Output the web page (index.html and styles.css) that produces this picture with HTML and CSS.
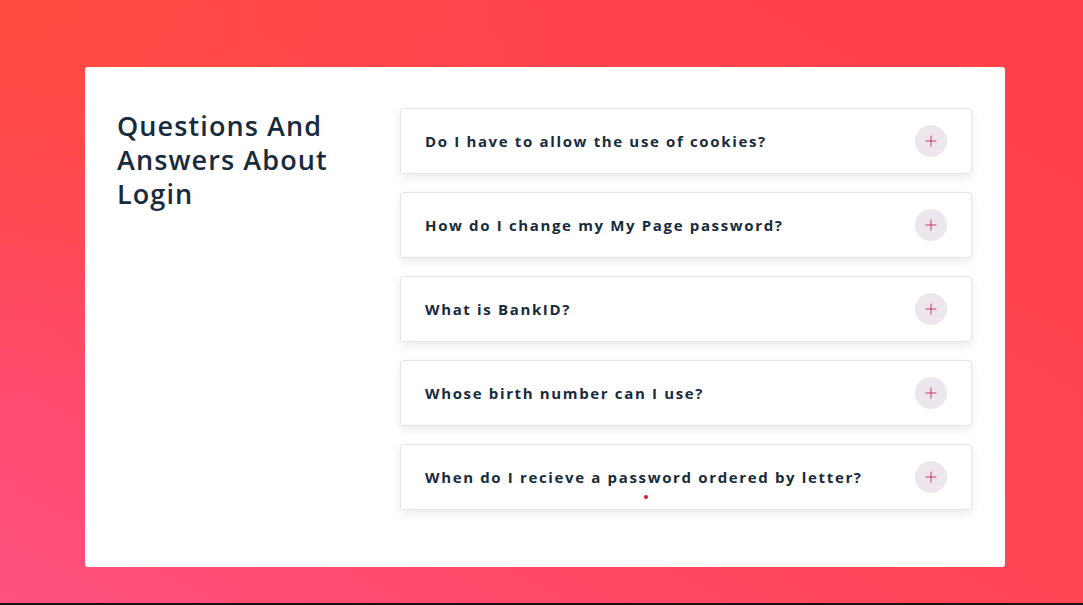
FILE: index.html
```html
<!DOCTYPE html>
<html>
<head>
<meta charset="utf-8">
<link rel="stylesheet" href="styles.css">
</head>
<body>
<div class="page">
  <div class="card">
    <div class="intro">
      <h1 class="title">Questions And Answers About Login</h1>
    </div>
    <div class="faq">
      <div class="item"><span class="q">Do I have to allow the use of cookies?</span><span class="toggle"></span></div>
      <div class="item"><span class="q">How do I change my My Page password?</span><span class="toggle"></span></div>
      <div class="item"><span class="q">What is BankID?</span><span class="toggle"></span></div>
      <div class="item"><span class="q">Whose birth number can I use?</span><span class="toggle"></span></div>
      <div class="item last"><span class="q">When do I recieve a password ordered by letter?</span><span class="toggle"></span><span class="dot"></span></div>
    </div>
  </div>
</div>
</body>
</html>
```
FILE: styles.css
```css
html { background: #1a1014; }
body {
  margin: 0;
  height: 603px;
  overflow: hidden;
  font-family: "Open Sans", "Noto Sans", sans-serif;
}
.page {
  height: 603px;
  box-sizing: border-box;
  padding: 67px 78px 0 85px;
  background:
    radial-gradient(ellipse 600px 400px at 0% 0%, rgba(255,80,50,0.6), rgba(255,80,50,0) 100%),
    linear-gradient(to top right, #ff5080 0%, #ff4556 45%, #ff3f47 100%);
}
.card {
  width: 920px;
  height: 500px;
  box-sizing: border-box;
  background: #fff;
  border-radius: 3px;
  display: flex;
  padding: 41px 33px 0 32px;
}
.intro { width: 283px; flex: none; }
.title {
  margin: 0;
  padding-top: 1px;
  font-size: 27px;
  font-weight: 600;
  line-height: 34px;
  letter-spacing: 1.1px;
  color: #172b3e;
  width: 240px;
}
.faq { flex: 1; display: flex; flex-direction: column; gap: 18px; }
.item {
  position: relative;
  height: 66px;
  box-sizing: border-box;
  border: 1px solid #e4e4e4;
  border-radius: 3px;
  box-shadow: 0 4px 10px rgba(0,0,0,0.08);
  display: flex;
  align-items: center;
  justify-content: space-between;
  padding: 0 24px 0 24px;
}
.q {
  font-size: 15px;
  font-weight: 700;
  letter-spacing: 1.65px;
  color: #172b3e;
}
.toggle {
  position: relative;
  width: 32px;
  height: 32px;
  border-radius: 50%;
  background: #ede6ec;
  flex: none;
}
.toggle::before, .toggle::after {
  content: "";
  position: absolute;
  background: #c8386c;
  left: 50%;
  top: 50%;
}
.toggle::before { width: 11px; height: 1px; transform: translate(-50%, -50%); }
.toggle::after { width: 1px; height: 11px; transform: translate(-50%, -50%); }
.dot {
  position: absolute;
  left: 243px;
  top: 50px;
  width: 4px;
  height: 4px;
  border-radius: 50%;
  background: #e0182f;
}
```
